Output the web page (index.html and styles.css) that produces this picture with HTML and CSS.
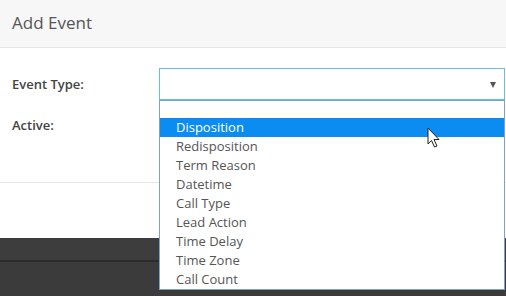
FILE: index.html
```html
<!DOCTYPE html>
<html>
<head>
<meta charset="utf-8">
<link rel="stylesheet" href="styles.css">
</head>
<body>
<div class="modal">
  <div class="modal-header"><h4 class="title">Add Event</h4></div>
  <div class="modal-body">
    <div class="row">
      <label class="label">Event Type:</label>
      <div class="select-wrap">
        <div class="select"><span class="arrow"></span></div>
        <ul class="dropdown">
          <li class="opt empty"></li>
          <li class="opt active">Disposition</li>
          <li class="opt">Redisposition</li>
          <li class="opt">Term Reason</li>
          <li class="opt">Datetime</li>
          <li class="opt">Call Type</li>
          <li class="opt">Lead Action</li>
          <li class="opt">Time Delay</li>
          <li class="opt">Time Zone</li>
          <li class="opt">Call Count</li>
        </ul>
        <svg class="cursor" width="14" height="22" viewBox="0 0 14 22"><path d="M1 1 L1 17 L4.5 13.5 L7.5 20 L10 19 L7 12.5 L12 12.5 Z" fill="#fff" stroke="#222" stroke-width="1" stroke-linejoin="round"/></svg>
      </div>
    </div>
    <div class="row row2">
      <label class="label">Active:</label>
    </div>
  </div>
  <div class="modal-footer"></div>
</div>
<div class="backdrop">
  <div class="bar1"></div>
  <div class="bar2"></div>
</div>
</body>
</html>
```
FILE: styles.css
```css
html, body { margin: 0; padding: 0; }
body {
  width: 506px;
  height: 296px;
  overflow: hidden;
  font-family: "Open Sans", "Liberation Sans", sans-serif;
  background: #3b3b3b;
}
.modal { background: #fff; }
.modal-header {
  height: 47px;
  background: #f7f7f7;
  border-bottom: 1px solid #e5e5e5;
  box-sizing: content-box;
  display: flex;
  align-items: center;
  padding-left: 12px;
}
.title {
  margin: 0;
  font-weight: 400;
  font-size: 17px;
  color: #555;
  padding-bottom: 3px;
}
.modal-body {
  padding-top: 20px;
  height: 114px;
}
.row {
  display: flex;
  align-items: center;
  height: 32px;
}
.row2 { margin-top: 10px; height: 30px; }
.label {
  width: 147px;
  padding-left: 12px;
  font-size: 13px;
  font-weight: 600;
  color: #444;
}
.select-wrap {
  position: relative;
  width: 346px;
  height: 32px;
}
.select {
  box-sizing: border-box;
  height: 32px;
  border: 1px solid #5fc2df;
  display: flex;
  align-items: center;
  justify-content: flex-end;
  padding-right: 8px;
  background: #fff;
}
.arrow {
  width: 0; height: 0;
  border-left: 3.5px solid transparent;
  border-right: 3.5px solid transparent;
  border-top: 6px solid #555;
  margin-top: 2px;
}
.dropdown {
  position: absolute;
  left: 0;
  top: 32px;
  width: 346px;
  box-sizing: border-box;
  margin: 0;
  padding: 0;
  list-style: none;
  border: 1px solid #7e9fd0;
  background: #fff;
  z-index: 5;
}
.opt {
  height: 19px;
  line-height: 19px;
  padding-left: 16px;
  font-size: 13px;
  color: #555;
}
.opt.empty { height: 17px; }
.opt.active { background: #0a8cf0; color: #fff; }
.cursor {
  position: absolute;
  left: 268px;
  top: 59px;
  z-index: 6;
}
.modal-footer {
  height: 55px;
  border-top: 1px solid #e5e5e5;
}
.backdrop { height: 58px; }
.bar1 { height: 22px; background: #3d3d3d; border-bottom: 2px solid #2b2b2b; }
.bar2 { height: 34px; background: #3b3b3b; }
```
